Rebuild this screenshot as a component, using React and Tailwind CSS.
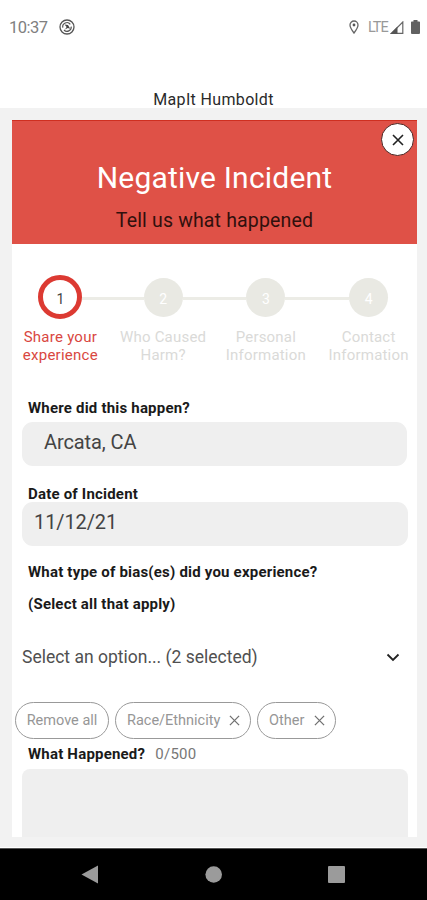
import React from "react";

const steps = [
  { id: 1, lines: ["Share your", "experience"] },
  { id: 2, lines: ["Who Caused", "Harm?"] },
  { id: 3, lines: ["Personal", "Information"] },
  { id: 4, lines: ["Contact", "Information"] },
];

const Cross = ({ className }) => (
  <svg viewBox="0 0 12 12" className={className} fill="none" stroke="currentColor">
    <path d="M1 1 11 11M11 1 1 11" />
  </svg>
);

const StatusBar = () => (
  <div className="h-[54px] flex items-center pl-[9px] pr-[7px] text-[#808080]">
    <span className="pt-[2px] text-[16.5px] tracking-[-0.5px] w-[50px]">10:37</span>
    <svg viewBox="0 0 16 16" className="w-4 h-4" fill="none" stroke="#555">
      <circle cx="8" cy="8" r="7" strokeWidth="1.3" />
      <path d="M3.8 8.6A4.2 4.2 0 0 1 11.3 5.3M12.2 7.6A4.2 4.2 0 0 1 5 11" strokeWidth="1.2" />
      <path d="M5.6 5.6 9 6 11.2 9.8 8.8 9 6 10.6 7.6 8Z" fill="#444" stroke="none" />
    </svg>
    <div className="ml-auto flex items-center">
      <svg viewBox="0 0 10 14" className="w-[10px] h-[14px]" fill="none" stroke="#666">
        <path d="M5 13C2.5 9.7 1 7.3 1 5a4 4 0 0 1 8 0c0 2.3-1.5 4.7-4 8Z" strokeWidth="1.3" />
        <circle cx="5" cy="5" r="1.4" fill="#555" stroke="none" />
      </svg>
      <span className="ml-[9px] w-[22px] pt-px text-[14.5px] tracking-[-1px] text-[#999]">LTE</span>
      <svg viewBox="0 0 14 13" className="w-[14px] h-[13px]">
        <path d="M1.5 12.3H12.8V1Z" fill="none" stroke="#666" strokeWidth="1.2" />
        <path d="M0 13H7.5V5.5Z" fill="#555" />
      </svg>
      <svg viewBox="0 0 9 14" className="ml-[7px] w-[9px] h-[14px]" fill="#616161">
        <path d="M2.5 0h4v1.5H8.2q.8 0 .8.8V13q0 1-1 1H1q-1 0-1-1V2.3q0-.8.8-.8H2.5Z" />
      </svg>
    </div>
  </div>
);

const Stepper = () => (
  <div className="-mx-[3px] mt-[31px] grid grid-cols-4">
    {steps.map((step, i) => (
      <div key={step.id} className="flex flex-col items-center">
        <div className="w-full h-[44px] flex items-center">
          <span className={i === 0 ? "flex-1" : "flex-1 h-[3px] mt-[2px] bg-[#ecece6]"} />
          {i === 0 ? (
            <span className="w-[44px] h-[44px] rounded-full border-[5px] border-[#dc3a32] bg-white flex items-center justify-center pt-[4px] text-[14px] text-[#444]">
              {step.id}
            </span>
          ) : (
            <span className="w-[39px] h-[39px] rounded-full bg-[#e9e9e3] flex items-center justify-center pt-[4px] text-[14px] text-white">
              {step.id}
            </span>
          )}
          <span className={i === 3 ? "flex-1" : "flex-1 h-[3px] mt-[2px] bg-[#ecece6]"} />
        </div>
        <p
          className={
            i === 0
              ? "mt-[9px] text-[15px] leading-[18px] tracking-[0.25px] text-center text-[#d9473f] whitespace-nowrap"
              : "mt-[9px] text-[15px] leading-[18px] tracking-[0.2px] text-center text-[#dadad8] whitespace-nowrap"
          }
        >
          {step.lines[0]}
          <br />
          {step.lines[1]}
        </p>
      </div>
    ))}
  </div>
);

const App = () => {
  return (
    <div className="w-[427px] h-[900px] overflow-hidden bg-white flex flex-col font-['Roboto',sans-serif] text-black">
      <StatusBar />
      <div className="h-[54px] flex items-end justify-center">
        <h1 className="text-[16px] leading-[17px] tracking-[0.35px] text-[#2a2a2a]">MapIt Humboldt</h1>
      </div>

      <div className="h-[739px] bg-[#f2f2f2] pt-3 pl-3 pr-[10px]">
        <div className="h-[717px] bg-white overflow-hidden">
          {/* Header */}
          <div className="relative h-[124px] bg-[#df5147] border-t border-[#cf2f20] text-center">
            <h2 className="pt-[38px] text-[30px] leading-[38px] tracking-[0.2px] text-white">Negative Incident</h2>
            <p className="mt-[11px] text-[19.5px] leading-[26px] tracking-[0.16px] text-[#30100d]">
              Tell us what happened
            </p>
            <button className="absolute top-[2px] right-[3px] w-[33px] h-[33px] rounded-full bg-white border border-[#4a2522] flex items-center justify-center">
              <Cross className="w-3 h-3 stroke-[1.6] text-[#222]" />
            </button>
          </div>

          <Stepper />

          {/* Form */}
          <div className="mt-[35px] pl-[10px] pr-[9px]">
            <label className="block h-[23px] pl-[6px] text-[15px] leading-[18px] font-bold tracking-[0.2px] text-[#1a1a1a]">
              Where did this happen?
            </label>
            <div className="h-[44px] mr-px rounded-[11px] bg-[#efefef] pl-[22px] text-[20px] leading-[40px] tracking-[-0.1px] text-[#444]">
              Arcata, CA
            </div>
            <label className="block mt-[19px] h-[17px] pl-[6px] text-[15px] leading-[18px] font-bold tracking-[0.2px] text-[#1a1a1a]">
              Date of Incident
            </label>
            <div className="h-[44px] rounded-[11px] bg-[#efefef] pl-[12px] text-[20px] leading-[40px] tracking-[-0.1px] text-[#444]">
              11/12/21
            </div>
            <p className="mt-[10px] pl-[6px] text-[15px] leading-[32px] font-bold tracking-[0.2px] text-[#1a1a1a]">
              What type of bias(es) did you experience?
              <br />
              (Select all that apply)
            </p>
            <div className="mt-[24px] h-[26px] flex items-center justify-between pr-[8px]">
              <span className="text-[17.5px] text-[#505050]">Select an option... (2 selected)</span>
              <svg viewBox="0 0 14 9" className="w-[14px] h-[9px]" fill="none" stroke="#222" strokeWidth="1.8">
                <path d="M1.5 1.5 7 7 12.5 1.5" />
              </svg>
            </div>
          </div>

          <div className="mt-[32px] pl-[3px] flex gap-[6px] text-[14.5px] leading-[20px] text-[#969696] whitespace-nowrap">
            <span className="w-[94px] h-[37px] rounded-full border border-[#999] flex items-center justify-center pt-px">
              Remove all
            </span>
            <span className="w-[136px] h-[37px] rounded-full border border-[#999] flex items-center justify-between pl-[11px] pr-[10px]">
              <span className="pt-px">Race/Ethnicity</span>
              <Cross className="w-[11px] h-[11px] stroke-[1.4] text-[#707070]" />
            </span>
            <span className="w-[79px] h-[37px] rounded-full border border-[#999] flex items-center justify-between pl-[11px] pr-[10px]">
              <span className="pt-px">Other</span>
              <Cross className="w-[11px] h-[11px] stroke-[1.4] text-[#707070]" />
            </span>
          </div>

          <div className="mt-[5px] pl-[16px] flex items-center text-[15px] leading-[20px]">
            <span className="font-bold tracking-[0.2px] text-[#1a1a1a]">What Happened?</span>
            <span className="ml-[10px] tracking-[0.3px] text-[#777]">0/500</span>
          </div>
          <div className="mt-[5px] ml-[10px] mr-[9px] h-[80px] rounded-t-[8px] bg-[#efefef]" />
        </div>
      </div>

      {/* Android nav */}
      <div className="mt-px h-[52px] bg-black border-t border-[#555]">
        <svg viewBox="0 0 427 51" className="w-[427px] h-[51px]" fill="#9b9b9b">
          <path d="M81.5 25.5 98 16.5V34.5Z" />
          <circle cx="213.7" cy="25.5" r="8.3" />
          <rect x="328" y="17" width="17" height="17" rx="1" />
        </svg>
      </div>
    </div>
  );
};

export default App;
